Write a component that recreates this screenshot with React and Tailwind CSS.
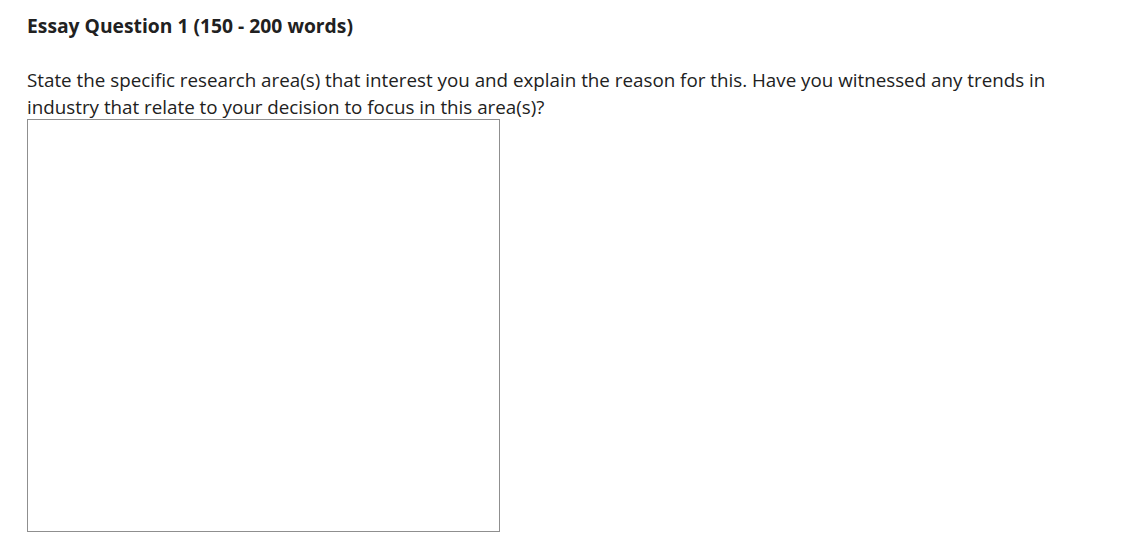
import React, { useState } from "react";

const EssayQuestion = () => {
  const [answer, setAnswer] = useState("");

  return (
    <div className="min-h-screen bg-white px-[27px] pt-[13px] font-['Open_Sans',sans-serif] text-[#212121]">
      {/* Heading */}
      <h2 className="text-[19.3px] font-bold leading-[26px]">
        Essay Question 1 (150 - 200 words)
      </h2>

      {/* Prompt */}
      <p className="mt-[28px] w-[1045px] text-[18.8px] leading-[27px]">
        State the specific research area(s) that interest you and explain the
        reason for this. Have you witnessed any trends in industry that relate
        to your decision to focus in this area(s)?
      </p>

      {/* Answer box */}
      <textarea
        value={answer}
        onChange={(e) => setAnswer(e.target.value)}
        className="-mt-[2px] block h-[413px] w-[473px] resize-none border border-[#8f8f8f] bg-white outline-none"
      />
    </div>
  );
};

export default function App() {
  return <EssayQuestion />;
}
